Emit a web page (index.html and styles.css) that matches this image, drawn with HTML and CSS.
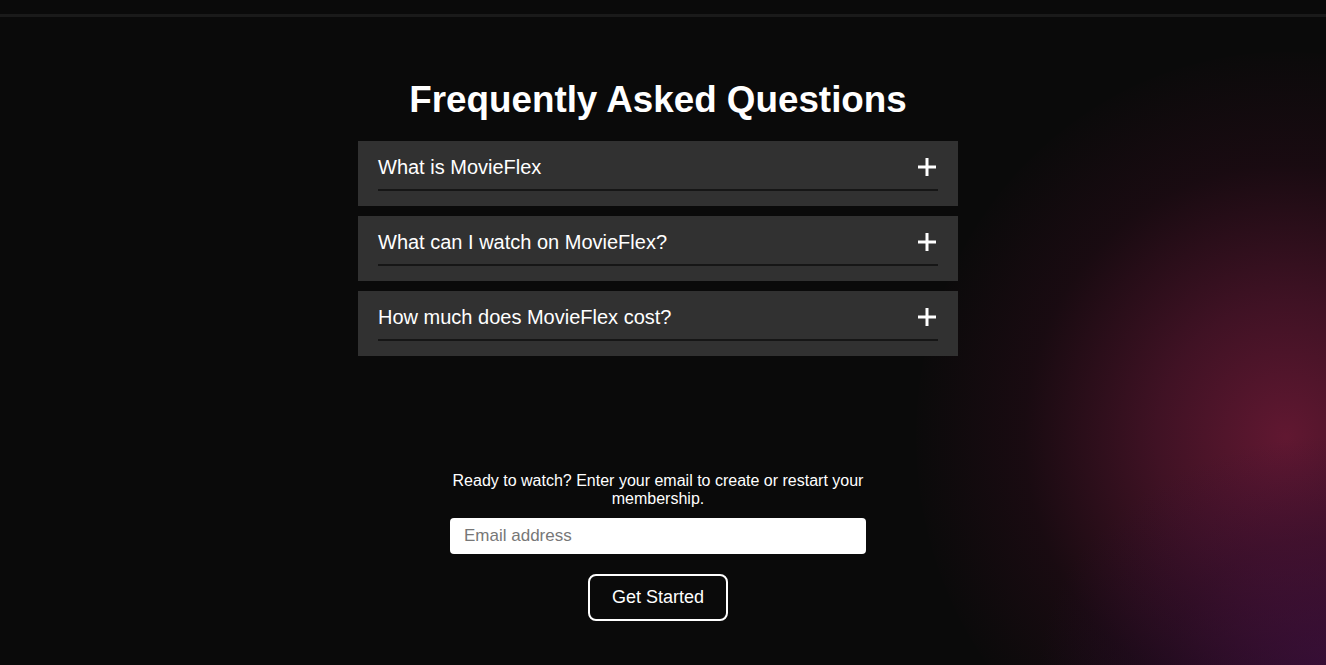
FILE: index.html
```html
<!DOCTYPE html>
<html lang="en">
<head>
<meta charset="utf-8">
<title>MovieFlex FAQ</title>
<link rel="stylesheet" href="styles.css">
</head>
<body>
<div class="topbar"></div>
<main class="page">
  <div class="glow"></div>
  <section class="faq">
    <h2 class="faq-title">Frequently Asked Questions</h2>
    <div class="faq-item">
      <div class="faq-q"><span>What is MovieFlex</span><svg class="plus" width="20" height="20" viewBox="0 0 20 20"><path d="M10 1v18M1 10h18" stroke="#fff" stroke-width="3"/></svg></div>
    </div>
    <div class="faq-item">
      <div class="faq-q"><span>What can I watch on MovieFlex?</span><svg class="plus" width="20" height="20" viewBox="0 0 20 20"><path d="M10 1v18M1 10h18" stroke="#fff" stroke-width="3"/></svg></div>
    </div>
    <div class="faq-item">
      <div class="faq-q"><span>How much does MovieFlex cost?</span><svg class="plus" width="20" height="20" viewBox="0 0 20 20"><path d="M10 1v18M1 10h18" stroke="#fff" stroke-width="3"/></svg></div>
    </div>
  </section>
  <section class="signup">
    <p class="signup-text">Ready to watch? Enter your email to create or restart your membership.</p>
    <input class="email" type="email" placeholder="Email address">
    <button class="start">Get Started</button>
  </section>
</main>
</body>
</html>
```
FILE: styles.css
```css
html, body {
  margin: 0;
  padding: 0;
  background: #0a0a0a;
  color: #fff;
  font-family: "Liberation Sans", Arial, sans-serif;
  height: 100%;
  overflow: hidden;
}
.topbar {
  height: 14px;
  border-bottom: 3px solid #1a1a1a;
}
.page {
  position: relative;
  height: 648px;
  box-sizing: border-box;
  padding-right: 10px;
  display: flex;
  flex-direction: column;
  align-items: center;
  overflow: hidden;
}
.glow {
  position: absolute;
  right: -330px;
  top: 35px;
  width: 740px;
  height: 770px;
  border-radius: 50%;
  background: radial-gradient(ellipse at 50% 50%, rgba(112,26,56,0.85) 0%, rgba(92,22,50,0.65) 25%, rgba(48,12,28,0.4) 50%, rgba(10,10,10,0) 72%);
  pointer-events: none;
}
.glow::after {
  content: "";
  position: absolute;
  left: 120px;
  top: 380px;
  width: 500px;
  height: 400px;
  border-radius: 50%;
  background: radial-gradient(ellipse at 60% 60%, rgba(70,16,80,0.55) 0%, rgba(50,12,60,0.3) 40%, rgba(10,10,10,0) 70%);
}
.faq {
  position: relative;
  width: 600px;
  margin-top: 59px;
  display: flex;
  flex-direction: column;
  gap: 10px;
}
.faq-title {
  margin: 0 0 8px;
  text-align: center;
  font-size: 36.8px;
  font-weight: bold;
  line-height: 47px;
}
.faq-item {
  background: #313131;
  padding: 8px 20px 15px;
}
.faq-q {
  display: flex;
  justify-content: space-between;
  align-items: center;
  font-size: 20px;
  height: 40px;
  border-bottom: 2px solid #161616;
}
.faq-q span {
  margin-bottom: 4px;
}
.plus {
  margin-right: 1px;
  margin-bottom: 4px;
}
.signup {
  position: relative;
  margin-top: 116px;
  display: flex;
  flex-direction: column;
  align-items: center;
  width: 416px;
}
.signup-text {
  margin: 0 0 10px;
  text-align: center;
  font-size: 16px;
  line-height: 18px;
}
.email {
  box-sizing: border-box;
  width: 416px;
  height: 36px;
  border: none;
  border-radius: 4px;
  padding: 0 14px;
  font-family: "Liberation Sans", Arial, sans-serif;
  font-size: 17px;
  color: #333;
  background: #fff;
  outline: none;
}
.email::placeholder {
  color: #777;
}
.start {
  margin-top: 20px;
  width: 140px;
  height: 47px;
  background: transparent;
  border: 2px solid #fff;
  border-radius: 8px;
  color: #fff;
  font-family: "Liberation Sans", Arial, sans-serif;
  font-size: 18px;
}
```
